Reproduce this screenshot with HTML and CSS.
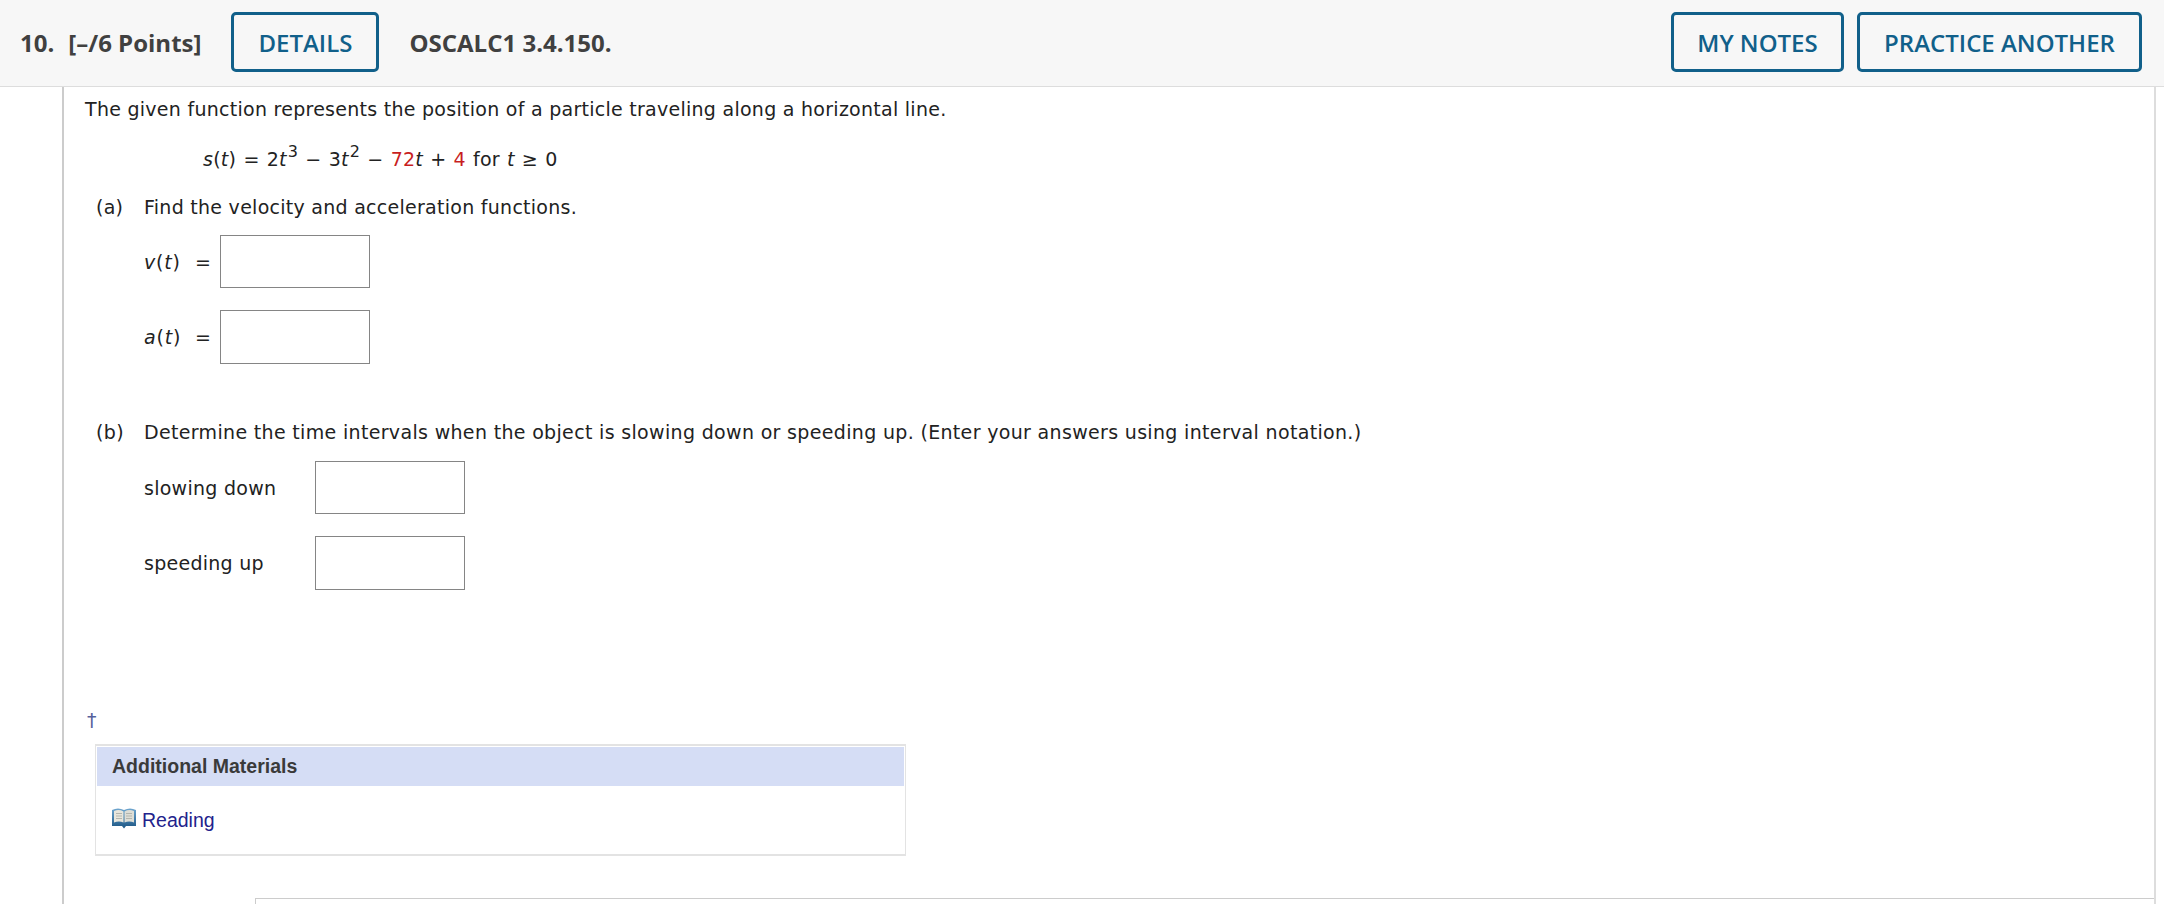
FILE: index.html
```html
<!DOCTYPE html>
<html lang="en">
<head>
<meta charset="utf-8">
<title>Question 10</title>
<link rel="stylesheet" href="styles.css">
</head>
<body>
<header class="bar">
  <span class="num">10.</span>
  <span class="points">[–/6 Points]</span>
  <button class="btn details">DETAILS</button>
  <span class="ref">OSCALC1 3.4.150.</span>
  <span class="spacer"></span>
  <button class="btn notes">MY NOTES</button>
  <button class="btn practice">PRACTICE ANOTHER</button>
</header>
<main class="question">
  <p class="line intro">The given function represents the position of a particle traveling along a horizontal line.</p>
  <p class="line formula"><i>s</i>(<i>t</i>) = 2<i>t</i><sup>3</sup> − 3<i>t</i><sup>2</sup> − <span class="red">72</span><i>t</i> + <span class="red">4</span> for <i>t</i> ≥ 0</p>
  <div class="part part-a"><span class="tag">(a)</span><span>Find the velocity and acceleration functions.</span></div>
  <div class="field f1"><span class="lbl-a"><i>v</i>(<i>t</i>)</span><span class="eq">=</span><span class="box"></span></div>
  <div class="field f2"><span class="lbl-a"><i>a</i>(<i>t</i>)</span><span class="eq">=</span><span class="box tall"></span></div>
  <div class="part part-b"><span class="tag">(b)</span><span>Determine the time intervals when the object is slowing down or speeding up. (Enter your answers using interval notation.)</span></div>
  <div class="field f3"><span class="lbl-b">slowing down</span><span class="box"></span></div>
  <div class="field f4"><span class="lbl-b">speeding up</span><span class="box tall"></span></div>
  <div class="dagger">†</div>
  <section class="materials">
    <h3 class="mat-head">Additional Materials</h3>
    <div class="mat-body">
      <svg class="book" width="24" height="21" viewBox="0 0 24 21" aria-hidden="true">
        <defs>
          <linearGradient id="bookCover" x1="0" y1="0" x2="0" y2="1">
            <stop offset="0" stop-color="#6ea6cf"/>
            <stop offset="1" stop-color="#1c5684"/>
          </linearGradient>
        </defs>
        <path d="M0 2 Q6 -1 12 2 Q18 -1 24 2 V18 H14 L12 20.500 L10 18 H0 Z" fill="url(#bookCover)"/>
        <path d="M2 3 Q7 1 11.500 3.500 V14.500 Q7 12.500 2 14.500 Z" fill="#e8e6dc"/>
        <path d="M22 3 Q17 1 12.500 3.500 V14.500 Q17 12.500 22 14.500 Z" fill="#deded6"/>
        <path d="M4 5.500h6M4 8h6M4 10.500h6M14 5.500h6M14 8h6M14 10.500h6" stroke="#b3b5ae" stroke-width="1.200"/>
      </svg>
      <a class="reading" href="#">Reading</a>
    </div>
  </section>
  <div class="next"></div>
</main>
</body>
</html>
```
FILE: styles.css
```css
* { box-sizing: border-box; }
html, body { margin: 0; padding: 0; height: 904px; overflow: hidden; background: #fff; }
body { font-family: "DejaVu Sans", Verdana, sans-serif; font-size: 19px; letter-spacing: 0.27px; color: #222; }

.bar {
  display: flex;
  align-items: center;
  height: 87px;
  padding: 0 22px 2px 20px;
  background: #f7f7f7;
  border-bottom: 1px solid #ddd;
  font-family: "Open Sans", sans-serif;
  font-size: 24px;
  font-weight: 700;
  letter-spacing: 0;
  color: #404040;
}
.num { margin-right: 14px; }
.points { margin-right: 30px; }
.ref { margin-left: 30px; }
.spacer { flex: 1; }
.btn {
  height: 60px;
  padding: 0;
  background: transparent;
  border: 3px solid #11608a;
  border-radius: 5px;
  font: inherit;
  font-weight: 600;
  color: #11608a;
}
.details { width: 148px; }
.notes { width: 173px; margin-right: 13px; }
.practice { width: 285px; }

.question {
  position: relative;
  height: 817px;
  margin: 0 8px 0 62px;
  padding: 10px 0 0 21px;
  border-left: 2px solid #ccc;
  border-right: 2px solid #ddd;
}
.line { margin: 0; line-height: 24px; }
.formula { margin: 26px 0 0 118px; word-spacing: 0.8px; }
.formula sup { font-size: 16px; line-height: 0; vertical-align: 9px; margin-left: 1px; }
.red { color: #c81e1e; }
.part { display: flex; line-height: 24px; margin-left: 11px; }
.tag { width: 48px; }
.part-a { margin-top: 24px; }
.part-b { margin-top: 56px; letter-spacing: 0.33px; }
.field { display: flex; align-items: center; margin-left: 59px; }
.f1 { margin-top: 16px; }
.f3 { margin-top: 17px; }
.f2 { margin-top: 22px; }
.f4 { margin-top: 22px; }
.lbl-a { width: 51px; letter-spacing: 0.8px; }
.eq { width: 25px; }
.lbl-b { width: 171px; }
.box {
  display: block;
  width: 150px;
  height: 53px;
  background: #fff;
  border: 1px solid #858585;
}
.tall { height: 54px; }
.dagger { margin-top: 118px; line-height: 24px; color: #56619c; margin-left: 2px; }
.materials {
  width: 811px;
  height: 112px;
  margin: 12px 0 0 10px;
  padding: 1px;
  border: 2px solid #e3e3e3;
  border-width: 1px;
  border-top-width: 2px;
  border-bottom-width: 2px;
}
.mat-head {
  margin: 0;
  height: 39px;
  padding-left: 15px;
  background: #d5ddf5;
  font: bold 19.500px/39px "Liberation Sans", Arial, sans-serif;
  letter-spacing: 0;
  color: #3a3a3a;
}
.mat-body { display: flex; align-items: flex-start; padding: 22px 0 0 15px; }
.book { flex: none; margin-right: 6px; }
.reading {
  font: 19.500px/24px "Liberation Sans", Arial, sans-serif;
  letter-spacing: 0;
  color: #22228c;
  text-decoration: none;
}
.next {
  position: absolute;
  left: 191px;
  right: 0;
  top: 811px;
  height: 10px;
  border-top: 1px solid #ccc;
  border-left: 1px solid #ccc;
}
```
